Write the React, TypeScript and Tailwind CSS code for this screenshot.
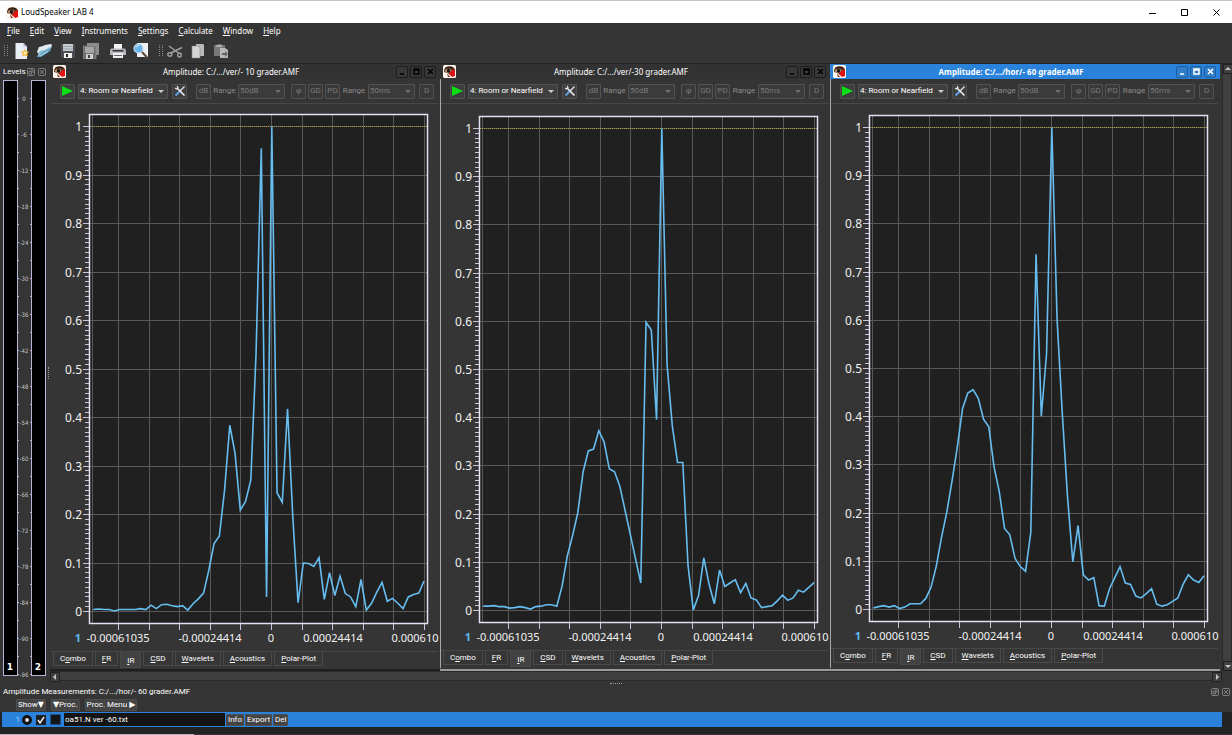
import { type ReactNode } from "react";

type Measurement = {
  title: string;
  active?: boolean;
  /* chart geometry: y of amplitude 1, y of amplitude 0, total height */
  one: number;
  zero: number;
  height: number;
  samples: number[];
};

const MEASUREMENTS: Measurement[] = [
  {
    title: "Amplitude: C:/.../ver/- 10 grader.AMF",
    one: 22,
    zero: 507,
    height: 547,
    samples: [
      0.004, 0.005, 0.004, 0.004, 0.001, 0.004, 0.004, 0.004, 0.004, 0.006, 0.004, 0.013, 0.006, 0.014, 0.015, 0.012,
      0.01, 0.012, 0.003, 0.016, 0.026, 0.038, 0.085, 0.14, 0.155, 0.25, 0.384, 0.326, 0.209, 0.227, 0.271, 0.532,
      0.955, 0.03, 1, 0.245, 0.225, 0.418, 0.195, 0.018, 0.1, 0.099, 0.093, 0.111, 0.025, 0.08, 0.033, 0.073, 0.037,
      0.03, 0.01, 0.066, 0.003, 0.017, 0.04, 0.06, 0.021, 0.027, 0.017, 0.006, 0.03, 0.035, 0.038, 0.063,
    ],
  },
  {
    title: "Amplitude: C:/.../ver/-30 grader.AMF",
    one: 24,
    zero: 506,
    height: 546,
    samples: [
      0.009, 0.009, 0.01, 0.008, 0.008, 0.005, 0.006, 0.008, 0.006, 0.003, 0.008, 0.009, 0.012, 0.012, 0.009, 0.05,
      0.113, 0.155, 0.203, 0.287, 0.331, 0.335, 0.373, 0.35, 0.294, 0.288, 0.258, 0.208, 0.158, 0.107, 0.057, 0.598,
      0.582, 0.396, 1, 0.511, 0.383, 0.307, 0.307, 0.093, 0.001, 0.031, 0.109, 0.055, 0.014, 0.084, 0.05, 0.057,
      0.064, 0.037, 0.056, 0.026, 0.022, 0.006, 0.008, 0.01, 0.02, 0.032, 0.021, 0.026, 0.042, 0.038, 0.048, 0.058,
    ],
  },
  {
    title: "Amplitude: C:/.../hor/- 60 grader.AMF",
    active: true,
    one: 23,
    zero: 505,
    height: 544,
    samples: [
      0.003, 0.006, 0.008, 0.005, 0.008, 0.002, 0.005, 0.012, 0.012, 0.012, 0.023, 0.046, 0.09, 0.15, 0.202, 0.267,
      0.337, 0.417, 0.449, 0.456, 0.438, 0.395, 0.379, 0.296, 0.244, 0.168, 0.155, 0.106, 0.089, 0.079, 0.16, 0.737,
      0.401, 0.53, 1, 0.603, 0.406, 0.233, 0.099, 0.174, 0.072, 0.061, 0.066, 0.008, 0.007, 0.043, 0.066, 0.089,
      0.055, 0.052, 0.028, 0.024, 0.033, 0.043, 0.011, 0.007, 0.01, 0.017, 0.024, 0.052, 0.072, 0.061, 0.056, 0.07,
    ],
  },
];

const MENUS = ["_File", "_Edit", "_View", "_Instruments", "_Settings", "_Calculate", "_Window", "_Help"];
const TABS = ["C_ombo", "_FR", "_IR", "_CSD", "_Wavelets", "_Acoustics", "_Polar-Plot"];
const X_LABELS = [
  { x: 68, text: "-0.00061035" },
  { x: 160, text: "-0.00024414" },
  { x: 221, text: "0" },
  { x: 283, text: "0.00024414" },
  { x: 365, text: "0.000610" },
];

/* The character after "_" is the keyboard mnemonic */
const Mnemonic = ({ label }: { label: string }) => {
  const at = label.indexOf("_");
  return (
    <span>
      {label.slice(0, at)}
      <u className="underline-offset-1">{label[at + 1]}</u>
      {label.slice(at + 2)}
    </span>
  );
};

const Logo = () => (
  <svg viewBox="0 0 13 13" className="size-[13px] shrink-0">
    <rect width="13" height="13" rx="1.500" fill="#fff6ee" />
    <path d="M1 5C2 2 5 1 8 1.500s4 2 4 4L11.500 9l-4 1-3-2L1 7z" fill="#553322" />
    <path d="M12 4v7l-3 1-3-3 2-3z" fill="#e01212" />
    <path d="M1.500 6c1.500-2.500 5-2.500 7-.5-1.500 2.500-5 3-7 .5z" fill="#b59878" />
    <circle cx="5.500" cy="5.800" r="1.700" fill="#15100c" />
    <path d="M2 3.500C4 1.500 7 1.500 10 3" stroke="#1d120c" fill="none" />
    <path d="M4 8.500l3 3.500H5z" fill="#6b1a14" />
  </svg>
);

const DockButtons = () => (
  <div className="flex gap-[3px]">
    <button aria-label="Float">
      <svg viewBox="0 0 8 8" className="block size-2" fill="none" stroke="#929292" strokeWidth="0.8">
        <rect x="0.500" y="0.500" width="7" height="7" rx="1" />
        <path d="M3 2h3v3M2 3.500h2.500V6H2z" />
      </svg>
    </button>
    <button aria-label="Close dock">
      <svg viewBox="0 0 8 8" className="block size-2" fill="none" stroke="#929292" strokeWidth="0.8">
        <rect x="0.500" y="0.500" width="7" height="7" rx="1" />
        <path d="M2 2l4 4M6 2L2 6" />
      </svg>
    </button>
  </div>
);

const Grip = () => (
  <svg viewBox="0 0 4 14" className="h-[14px] w-1" fill="#858585">
    {[1, 3, 5, 7, 9, 11].map((y) => (
      <path key={y} d={`M0 ${y}h1v1h-1zM3 ${y}h1v1h-1z`} />
    ))}
  </svg>
);

const ToolIcon = ({ label, children }: { label: string; children: ReactNode }) => (
  <button aria-label={label} className="size-4">
    <svg viewBox="0 0 16 16" className="size-4">
      {children}
    </svg>
  </button>
);

const MainToolbar = () => (
  <div className="flex h-[26px] items-center border-b border-[#222] px-1">
    <Grip />
    <div className="ml-1.5 flex gap-[7px]">
      <ToolIcon label="New">
        <path d="M1.500 0h8l3.500 3.500V16H1.500z" fill="#e9edf6" />
        <path d="M9.500 0v3.500H13z" fill="#aab5d0" />
        <path d="M11 6l1.300 2.400 2.700.2-1.700 2.100.6 2.700-2.900-1-2.600 1.200.4-2.900-2-2 2.800-.4z" fill="#f5b53a" />
        <circle cx="11" cy="10" r="1.500" fill="#fff3b0" />
      </ToolIcon>
      <ToolIcon label="Open">
        <path d="M0 9l2-5 4-1 2-1 6-1 1 1-2 6-9 5z" fill="#e3edf0" />
        <path d="M0 14l3-6 4-1 8.500-4L12 9l-8 5z" fill="#5d9fc0" />
        <path d="M1 13.500L4 9l10-5M3 13l8-5" stroke="#b9dced" fill="none" />
      </ToolIcon>
      <ToolIcon label="Save">
        <path d="M1 1h14v14H2l-1-1z" fill="#4b4e55" />
        <path d="M3 1h10v7H3z" fill="#c9ccd2" />
        <path d="M3 3h10v1H3zM3 5.500h10v1H3z" fill="#9a9ea6" />
        <path d="M4 10h8v5H4z" fill="#f1f1f1" />
        <path d="M6 11h2v3H6z" fill="#222" />
      </ToolIcon>
      <ToolIcon label="Save all">
        <path d="M4 0h12v12H4z" fill="#8b8b8b" />
        <path d="M0 3h13v13H1l-1-1z" fill="#6f6f6f" stroke="#999" strokeWidth="0.600" />
        <path d="M2 4h9v6H2z" fill="#a6a6a6" />
        <path d="M3 11h7v5H3z" fill="#cfcfcf" />
        <path d="M5 12h2v3H5z" fill="#444" />
      </ToolIcon>
    </div>
    <div className="ml-[11px] flex gap-[7px]">
      <ToolIcon label="Print">
        <path d="M4 1h8v6H4z" fill="#f4f4f4" />
        <path d="M1 5.500h14l1 2V12H0V7.500z" fill="#b5b8bd" />
        <path d="M2.500 7h11v1.500h-11z" fill="#333" />
        <path d="M3 10h10v5H3z" fill="#eee" />
        <path d="M4 12h8v1H4z" fill="#666" />
      </ToolIcon>
      <ToolIcon label="Preview">
        <path d="M4 0h11v14H4z" fill="#eef0f2" />
        <circle cx="5.500" cy="5.500" r="4.500" fill="#69b4ea" stroke="#c5dcec" strokeWidth="1.200" />
        <path d="M3 4.500a3 3 0 013-2" stroke="#d9f1ff" fill="none" />
        <path d="M9 9l5.500 6" stroke="#5b4a3b" strokeWidth="2" />
      </ToolIcon>
    </div>
    <div className="ml-2.5 flex items-center">
      <Grip />
    </div>
    <div className="ml-1 flex gap-[7px]">
      <ToolIcon label="Cut">
        <g fill="none" stroke="#a2a2a2">
          <path d="M2 3l9.500 7M15 4.500L4 10" strokeWidth="1.400" />
          <ellipse cx="2.800" cy="11.500" rx="2" ry="1.700" strokeWidth="1.400" />
          <ellipse cx="12.500" cy="12" rx="1.700" ry="2" strokeWidth="1.400" />
        </g>
      </ToolIcon>
      <ToolIcon label="Copy">
        <path d="M6 1h7l1 1v11H6z" fill="#b9b9b9" />
        <path d="M2 3h6l2 2v10H2z" fill="#d5d5d5" stroke="#8b8b8b" strokeWidth="0.600" />
      </ToolIcon>
      <ToolIcon label="Paste">
        <path d="M1 2h3l1-1h3l1 1h3v11H1z" fill="#777" />
        <path d="M3 2h6v2H3z" fill="#aaa" />
        <path d="M7 5h5l3 2v8H7z" fill="#b8b8b8" />
        <path d="M9 10h3V8l3 3-3 3v-2H9z" fill="#666" />
      </ToolIcon>
    </div>
  </div>
);

const MeterPanel = () => (
  <aside className="w-[47px] shrink-0">
    <div className="flex h-4 items-center justify-between pr-px pl-[3px]">
      <h2 className="font-['Roboto',sans-serif] text-[8px] leading-[10px]">Levels</h2>
      <DockButtons />
    </div>
    <svg viewBox="0 0 47 597" className="block w-full" role="img" aria-label="Input levels">
      <g fill="#000" stroke="#b9b4d8">
        <rect x="3.500" y="0.500" width="14" height="595" />
        <rect x="31.500" y="0.500" width="14" height="595" />
      </g>
      {Array.from({ length: 33 }, (_, i) => (
        <path key={i} d={`M18 ${18.5 + i * 18}h1M30 ${18.5 + i * 18}h1`} stroke="#bbb" />
      ))}
      <g className="font-['DejaVu_Sans_Condensed','DejaVu_Sans',sans-serif] text-[6px]" fill="#c8c8c8" textAnchor="middle">
        {Array.from({ length: 17 }, (_, i) => (
          <text key={i} x="24" y={21 + i * 36}>
            {i === 0 ? "0" : -6 * i}
          </text>
        ))}
      </g>
      <g className="font-['DejaVu_Sans',sans-serif] text-[9px] font-bold" fill="#fff" textAnchor="middle">
        <text x="10" y="590">1</text>
        <text x="38" y="590">2</text>
      </g>
    </svg>
  </aside>
);

const ToolButton = ({ label, disabled, children }: { label: string; disabled?: boolean; children: ReactNode }) => (
  <button
    aria-label={label}
    disabled={disabled}
    className="flex size-[15px] shrink-0 items-center justify-center rounded-[1px] border border-[#525252] bg-[#3e3e3e] text-[8px] disabled:bg-[#393939] disabled:text-[#7a7a7a]"
  >
    {children}
  </button>
);

const Dropdown = ({ label, value, wide }: { label: string; value: string; wide?: boolean }) => (
  <span className={`relative h-[15px] shrink-0 ${wide ? "w-[90px]" : "w-[47px]"}`}>
    <select
      aria-label={label}
      disabled={!wide}
      className="block h-[15px] w-full appearance-none rounded-[1px] border border-[#525252] bg-[#3f3f3f] pl-px text-[8px] leading-[12px] text-white disabled:bg-[#3b3b3b] disabled:text-[#7a7a7a] disabled:opacity-100"
    >
      <option>{value}</option>
    </select>
    <svg viewBox="0 0 6 3" className="pointer-events-none absolute top-[6px] right-1 h-[3px] w-[6px]">
      <path d="M0 0h6L3 3z" fill={wide ? "#ccc" : "#707070"} />
    </svg>
  </span>
);

const WindowToolbar = () => (
  <div className="flex h-6 items-center pl-[9px] font-['Roboto',sans-serif]">
    <ToolButton label="Start measurement">
      <svg viewBox="0 0 11 10" className="h-[10px] w-[11px] shrink-0">
        <path d="M0 0l11 5-11 5z" fill="#0be015" />
      </svg>
    </ToolButton>
    <span className="w-[3px]" />
    <Dropdown label="Measurement setup" value="4: Room or Nearfield" wide />
    <span className="w-1" />
    <ToolButton label="Configure">
      <svg viewBox="0 0 12 12" className="size-3 shrink-0" fill="none">
        <path d="M1.500 10.500L6 6" stroke="#5f9fe0" strokeWidth="2.200" />
        <path d="M6 6l4.500-4.500" stroke="#ddd" strokeWidth="1.400" />
        <path d="M3 3l7.500 7.500" stroke="#f0f0f0" strokeWidth="1.600" />
        <path d="M1 3l1.500 1L4 2.500 3 1" stroke="#e4e4e4" strokeWidth="1.200" />
      </svg>
    </ToolButton>
    <span className="w-[9px]" />
    <ToolButton label="Decibel" disabled>dB</ToolButton>
    <span className="w-[27px] text-center text-[8px] text-[#8a8a8a]">Range</span>
    <Dropdown label="Level range" value="50dB" />
    <span className="w-[6px]" />
    <div className="flex gap-0.5">
      <ToolButton label="Phase" disabled>φ</ToolButton>
      <ToolButton label="Group delay" disabled>GD</ToolButton>
      <ToolButton label="Phase delay" disabled>PD</ToolButton>
    </div>
    <span className="w-[28px] text-center text-[8px] text-[#8a8a8a]">Range</span>
    <Dropdown label="Time range" value="50ms" />
    <span className="w-1" />
    <ToolButton label="Distortion" disabled>D</ToolButton>
  </div>
);

const Chart = ({ one, zero, height, samples, title }: Measurement) => {
  const step = (zero - one) / 10;
  const y = (amplitude: number) => zero - amplitude * (zero - one);
  const bottom = zero + 13;
  const gridX = [42.5, ...Array.from({ length: 11 }, (_, i) => Math.round(68 + i * 30.6) + 0.5)];
  return (
    <svg viewBox={`0 0 390 ${height}`} className="block w-full" role="img" aria-label={title}>
      <rect x="39" y={one - 12} width="339" height={bottom - one + 12} fill="#202020" />
      <g stroke="#595959" shapeRendering="crispEdges">
        {gridX.map((x) => (
          <path key={x} d={`M${x} ${one - 12}V${bottom}`} />
        ))}
        {Array.from({ length: 10 }, (_, i) => (
          <path key={i} d={`M39 ${Math.round(one + (i + 1) * step) + 0.5}H378`} />
        ))}
      </g>
      <path d={`M40 ${one + 0.5}H378`} stroke="#5d5a3c" shapeRendering="crispEdges" />
      <path d={`M40 ${one + 0.5}H378`} stroke="#a39a55" strokeDasharray="1 1" shapeRendering="crispEdges" />
      <g stroke="#c9c5de" shapeRendering="crispEdges">
        {Array.from({ length: 101 }, (_, i) => (
          <path key={i} d={`M${i % 10 === 0 ? 33 : 35} ${Math.round(one + (i * step) / 10) + 0.5}H39`} />
        ))}
        {gridX.slice(1).map((x) => (
          <path key={x} d={`M${x} ${bottom}v6`} />
        ))}
      </g>
      <polyline
        points={samples.map((s, i) => `${43.3 + i * 5.25},${y(s) + 0.5}`).join(" ")}
        fill="none"
        stroke="#66bdf0"
        strokeWidth="1.600"
      />
      <rect x="39.500" y={one - 11.5} width="338" height={bottom - one + 11} fill="none" stroke="#e4e1f2" strokeWidth="1.500" />
      <g className="font-['Noto_Sans',sans-serif] text-[12px]" fill="#f2f2f2">
        {Array.from({ length: 11 }, (_, i) => (
          <text key={i} x="32" y={Math.round(one + i * step) + 5} textAnchor="end">
            {i === 0 ? "1" : i === 10 ? "0" : `0.${10 - i}`}
          </text>
        ))}
      </g>
      <g className="font-['Noto_Sans',sans-serif] text-[11px]" fill="#f2f2f2" textAnchor="middle">
        {X_LABELS.map((label) => (
          <text key={label.text} x={label.x} y={bottom + 18}>
            {label.text}
          </text>
        ))}
        <text x="28" y={bottom + 18} fill="#5db9ea" className="font-bold">1</text>
      </g>
    </svg>
  );
};

const MeasurementWindow = (props: Measurement) => {
  const frame = props.active ? "border-[#1d5f9f] bg-[#2f7dc8]" : "border-[#1c1c1c] bg-[#383838]";
  return (
    <section className="group flex min-w-0 flex-col border-b-2 border-b-[#9a9a9a] pb-px first:border-b-[#1f1f1f]">
      <header
        className={`flex h-[15px] items-center pr-1 pl-[3px] ${props.active ? "bg-[#2a82da] font-bold" : "bg-[#323232]"}`}
      >
        <Logo />
        <h2 className="flex-1 text-center text-[8px]">{props.title}</h2>
        <div className="flex gap-0.5">
          {["M3 8h4", "M3 3h5v5H3zM3 4h5", "M3 3l5 5M8 3L3 8"].map((d, i) => (
            <button
              key={d}
              aria-label={["Minimize", "Maximize", "Close"][i]}
              className={`flex size-3 items-center justify-center rounded-[2px] border ${frame}`}
            >
              <svg viewBox="0 0 11 11" className={`size-[11px] shrink-0 ${props.active ? "text-white" : "text-black"}`}>
                <path d={d} fill="none" stroke="currentColor" strokeWidth="1.500" />
              </svg>
            </button>
          ))}
        </div>
      </header>
      <div className="flex flex-1 flex-col border-l border-l-[#a8a8a8] group-first:border-l-[#353535]">
        <WindowToolbar />
        <div className="mr-0.5 border-y border-[#484848]">
          <div className="-mr-0.5 -ml-px">
            <Chart {...props} />
          </div>
        </div>
        <div role="tablist" className="flex items-start gap-0.5 pl-0.5 font-['Roboto',sans-serif]">
          {TABS.map((tab) => (
            <button
              key={tab}
              role="tab"
              aria-selected={tab === "_IR"}
              className={`border border-t-0 border-[#4a4a4a] px-[6px] text-[8px] ${
                tab === "_IR" ? "h-4 bg-[#424242] pt-0.5" : "h-[14px] bg-[#363636]"
              }`}
            >
              <Mnemonic label={tab} />
            </button>
          ))}
        </div>
      </div>
    </section>
  );
};

const ScrollArrow = ({ label, d }: { label: string; d: string }) => (
  <button aria-label={label} className="flex size-[10px] shrink-0 items-center justify-center border border-[#222] bg-[#404040]">
    <svg viewBox="0 0 6 6" className="size-[6px]">
      <path d={d} fill="#c8c8c8" />
    </svg>
  </button>
);

const MeasurementDock = () => {
  const button = "h-3 rounded-[1px] border border-[#4d4d4d] bg-[#434343] px-px text-[8px] leading-[10px]";
  return (
    <section className="flex flex-1 flex-col font-['Roboto','DejaVu_Sans',sans-serif]">
      <div className="flex h-[13px] items-center justify-between pr-0.5 pl-[3px]">
        <h2 className="text-[8px]">Amplitude Measurements: C:/.../hor/- 60 grader.AMF</h2>
        <DockButtons />
      </div>
      <div className="flex h-[14px] items-center gap-[5px] pl-4">
        <button className={button}>Show▼</button>
        <button className={button}>▼Proc.</button>
        <button className={button}>Proc. Menu ▶</button>
      </div>
      <div className="flex-1 bg-[#232323]">
        <div className="mr-[10px] ml-0.5 flex h-[15px] items-center bg-[#2a82da]">
          <span className="w-[18px] text-right text-[8px] text-[#8fd8ff]">1</span>
          <input
            type="radio"
            aria-label="Select measurement"
            defaultChecked
            className="ml-0.5 size-[10px] appearance-none rounded-full border-[3px] border-[#111] bg-[#ddd]"
          />
          <span className="relative ml-1 size-[10px]">
            <input
              type="checkbox"
              aria-label="Show curve"
              defaultChecked
              className="block size-[10px] appearance-none border border-[#222] bg-[#1c1c1c]"
            />
            <svg viewBox="0 0 10 10" className="pointer-events-none absolute inset-0 size-[10px]">
              <path d="M2 5l2 3 4-6" fill="none" stroke="#eee" strokeWidth="1.500" />
            </svg>
          </span>
          <button aria-label="Curve colour" className="ml-1 size-[11px] border border-[#1b4f86] bg-[#151515]" />
          <input
            aria-label="Measurement name"
            defaultValue="oa51.N ver -60.txt"
            className="ml-[3px] h-[13px] w-[161px] bg-[#141414] pl-px text-[8px] text-white"
          />
          <div className="ml-px flex gap-px">
            <button className={button}>Info</button>
            <button className={button}>Export</button>
            <button className={button}>Del</button>
          </div>
        </div>
      </div>
      <div className="h-px w-[194px] bg-[#b5b5b5]" />
    </section>
  );
};

export default function App() {
  return (
    <main className="flex min-h-screen flex-col bg-[#353535] font-['Noto_Sans',sans-serif] text-white">
      <header className="flex h-[23px] items-center border-t border-[#c4c4c4] bg-white pl-[6px] text-black">
        <Logo />
        <h1 className="ml-0.5 flex-1 text-[8px]">LoudSpeaker LAB 4</h1>
        {["M1 6.500h7", "M1.500 2.500h6v6h-6z", "M1.500 2.500l6 6M7.500 2.500l-6 6"].map((d, i) => (
          <button key={d} aria-label={["Minimize", "Maximize", "Close"][i]} className="flex h-full w-8 items-center justify-center">
            <svg viewBox="0 0 9 11" className="h-[11px] w-[9px]" fill="none" stroke="#000">
              <path d={d} />
            </svg>
          </button>
        ))}
      </header>
      <nav className="flex h-[15px] items-center gap-[10px] pl-[7px] text-[8px]">
        {MENUS.map((menu) => (
          <button key={menu}>
            <Mnemonic label={menu} />
          </button>
        ))}
      </nav>
      <MainToolbar />
      <div className="flex">
        <MeterPanel />
        <div className="flex w-[3px] shrink-0 items-center justify-center">
          <span className="h-3 border-l border-dotted border-[#999]" />
        </div>
        <div className="flex min-w-0 flex-1 flex-col">
          <div className="flex flex-1">
            <div className="grid flex-1 grid-cols-3 pr-0.5">
              {MEASUREMENTS.map((m) => (
                <MeasurementWindow key={m.title} {...m} />
              ))}
            </div>
            <div className="flex w-[10px] shrink-0 flex-col justify-between border-x border-[#2a2a2a] bg-[#404040]">
              <ScrollArrow label="Scroll up" d="M0 4h6L3 1z" />
              <ScrollArrow label="Scroll down" d="M0 2h6L3 5z" />
            </div>
          </div>
          <div className="mr-[10px] flex h-[10px] justify-between border-y border-[#2a2a2a] bg-[#404040]">
            <ScrollArrow label="Scroll left" d="M4 0v6L1 3z" />
            <ScrollArrow label="Scroll right" d="M2 0v6l3-3z" />
          </div>
        </div>
      </div>
      <div className="flex h-1 items-center justify-center">
        <span className="w-3 border-t border-dotted border-[#999]" />
      </div>
      <MeasurementDock />
    </main>
  );
}
